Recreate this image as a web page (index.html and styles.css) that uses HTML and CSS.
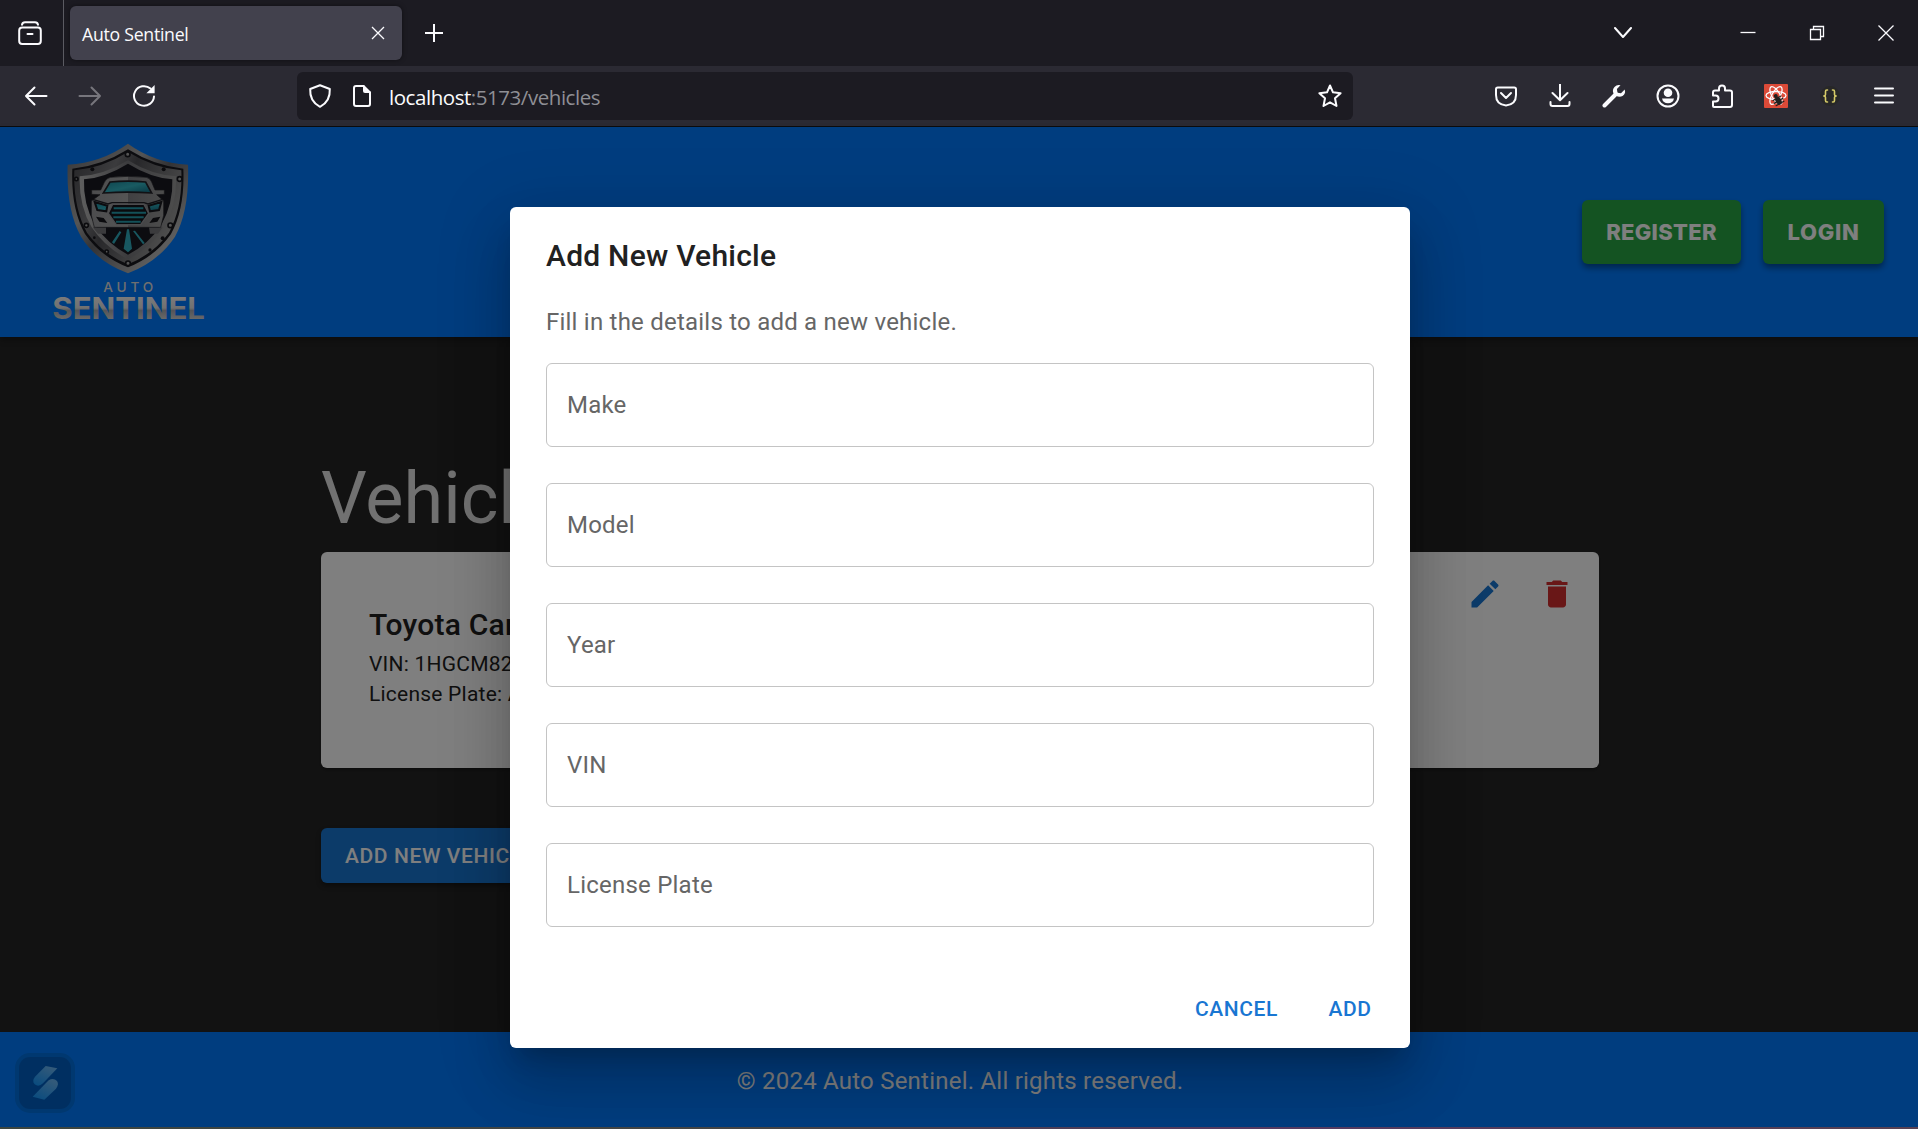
FILE: index.html
```html
<!DOCTYPE html>
<html lang="en">
<head>
<meta charset="utf-8">
<title>Auto Sentinel</title>
<link rel="stylesheet" href="styles.css">
</head>
<body>
<div class="browser">
  <div class="tabstrip">
    <div class="firefox-view">
      <svg class="icon" viewBox="0 0 24 24"><rect x="1.2" y="6.6" width="21.600" height="16.400" rx="3"/><path d="M4 3.700Q4.500 1.200 7 1.200H17Q19.500 1.200 20 3.700M9.500 13H14.500"/></svg>
    </div>
    <div class="tab"><span class="tab-title">Auto Sentinel</span>
      <svg class="tab-close thin" viewBox="0 0 14 14"><path d="M1 1L13 13M13 1L1 13"/></svg>
    </div>
    <svg class="new-tab" viewBox="0 0 18 18"><path d="M9 0V18M0 9H18"/></svg>
    <div class="window-controls">
      <svg class="tabs-list" viewBox="0 0 18 12"><path d="M1 1L9 10L17 1"/></svg>
      <svg class="thin" viewBox="0 0 16 16"><path d="M.5 7.500H15.500"/></svg>
      <svg class="thin" viewBox="0 0 16 16"><path d="M1.500 4.500H11.500V14.500H1.500ZM4.500 4.500V1.500H14.500V11.500H11.500"/></svg>
      <svg class="thin" viewBox="0 0 16 16"><path d="M.5.5L15.500 15.500M15.500.5L.5 15.500"/></svg>
    </div>
  </div>
  <div class="toolbar">
    <div class="nav-buttons">
      <svg class="icon" viewBox="0 0 24 24"><path d="M22.500 12H2M10.500 3.500L2 12L10.500 20.500"/></svg>
      <svg class="icon disabled" viewBox="0 0 24 24"><path d="M1.500 12H22M13.500 3.500L22 12L13.500 20.500"/></svg>
      <svg class="icon" viewBox="0 0 24 24"><path d="M22 12.500A10 9.800 0 1 1 18.500 4.500"/><path class="solid" d="M22.600 1V9.200H14.400Z"/></svg>
    </div>
    <div class="urlbar">
      <svg class="icon" viewBox="0 0 24 24"><path d="M12 1.200L21.800 5Q22.500 17.500 12 22.800Q1.500 17.500 2.200 5Z"/></svg>
      <svg class="icon" viewBox="0 0 24 24"><path d="M13.500 2H6Q4 2 4 4V20Q4 22 6 22H18Q20 22 20 20V8.500"/><path class="solid" d="M13 1H14L21 8V9H15Q13 9 13 7Z"/></svg>
      <span class="url">localhost<span class="url-rest">:5173/vehicles</span></span>
      <svg class="icon star" viewBox="0 0 24 24"><path d="M12 1.500L15 8.300L22.600 9.200L17 14.300L18.500 22L12 18.300L5.500 22L7 14.300L1.400 9.200L9 8.300Z"/></svg>
    </div>
    <div class="extensions">
      <svg class="icon" viewBox="0 0 24 24"><path d="M3.800 3.500H20.200Q22 3.500 22 5.300V11Q22 20.500 12 21.500Q2 20.500 2 11V5.300Q2 3.500 3.800 3.500ZM7 9L12 14L17 9"/></svg>
      <svg class="icon" viewBox="0 0 24 24"><path d="M12 0V16M4.500 9L12 16.200L19.500 9M2.500 18V20Q2.500 22 4.500 22H19.500Q21.500 22 21.500 20V18"/></svg>
      <svg class="icon" viewBox="0 0 24 24"><path class="wrench" d="M2.500 21.500L14 10"/><path class="solid" d="M18.500 1.300L14.900 5L15.500 8.800L19 9.300L22.700 5.600Q24 10 20.500 12Q17.500 13.700 14 11.800L11.500 9.500Q9.900 5.800 12.500 3Q15 .3 18.500 1.300Z"/></svg>
      <svg class="icon" viewBox="0 0 24 24"><circle cx="12" cy="12" r="10.500"/><circle class="solid" cx="12" cy="8.800" r="4.300"/><path class="solid" d="M6 14.500H18Q17 19.300 12 19.300Q7 19.300 6 14.500Z"/></svg>
      <svg class="icon" viewBox="0 0 24 24"><path d="M4 23H20Q22 23 22 21V8.500Q22 6.500 20 6.500H15V4.500A3 3 0 0 0 9 4.500V6.500H5Q3 6.500 3 8.500V11.500H5.500A3 3 0 0 1 5.500 17.500H3V22Q3 23 4 23Z"/></svg>
      <svg class="icon react" viewBox="0 0 24 24"><rect class="react-bg" width="24" height="24" rx="1"/><ellipse cx="12" cy="11.500" rx="10" ry="4"/><ellipse cx="12" cy="11.500" rx="10" ry="4" transform="rotate(60 12 11.500)"/><ellipse cx="12" cy="11.500" rx="10" ry="4" transform="rotate(120 12 11.500)"/><g transform="rotate(-30 14 16)"><ellipse class="bug" cx="14" cy="17" rx="2.800" ry="4.300"/><circle class="bug" cx="14" cy="11.500" r="2"/><path class="bug-legs" d="M9.500 14L18.500 14M9 17H19M9.500 20L18.500 20"/></g></svg>
      <svg class="icon braces" viewBox="0 0 24 24"><circle class="braces-bg" cx="12" cy="12" r="10"/><path d="M9.500 6H8.800Q7.500 6 7.500 7.500V10.500Q7.500 12 5.800 12Q7.500 12 7.500 13.500V16.500Q7.500 18 8.800 18H9.500M14.500 6H15.200Q16.500 6 16.500 7.500V10.500Q16.500 12 18.200 12Q16.500 12 16.500 13.500V16.500Q16.500 18 15.200 18H14.500"/></svg>
      <svg class="icon" viewBox="0 0 24 24"><path d="M3 4.500H21M3 11.500H21M3 18.500H21"/></svg>
    </div>
  </div>
  <div class="viewport">
    <header class="app-header">
      <svg class="logo" viewBox="0 0 540 630" role="img" aria-label="Auto Sentinel">
        <defs>
          <linearGradient id="metal" x1="0" y1="0" x2="1" y2="1"><stop offset="0" stop-color="#6d6d70"/><stop offset=".35" stop-color="#aaa"/><stop offset=".5" stop-color="#66666a"/><stop offset=".8" stop-color="#bbb"/><stop offset="1" stop-color="#777"/></linearGradient>
          <linearGradient id="rim" x1="0" y1="0" x2="1" y2="0"><stop offset="0" stop-color="#bdbdbd"/><stop offset=".5" stop-color="#77777b"/><stop offset="1" stop-color="#999"/></linearGradient>
          <linearGradient id="band" x1="0" y1="0" x2="1" y2=".5"><stop offset="0" stop-color="#4b4b50"/><stop offset=".35" stop-color="#77777b"/><stop offset=".5" stop-color="#505055"/><stop offset="1" stop-color="#9b9b9b"/></linearGradient>
          <linearGradient id="glass" x1="0" y1="0" x2="1" y2="1"><stop offset="0" stop-color="#1d8b9f"/><stop offset=".5" stop-color="#33b6c4"/><stop offset="1" stop-color="#126c83"/></linearGradient>
          <linearGradient id="body" x1="0" y1="0" x2="1" y2="0"><stop offset="0" stop-color="#99999c"/><stop offset=".5" stop-color="#aaa"/><stop offset=".5" stop-color="#808084"/><stop offset="1" stop-color="#999"/></linearGradient>
          <linearGradient id="word" gradientUnits="userSpaceOnUse" x1="0" y1="-64" x2="0" y2="0"><stop offset="0" stop-color="#f5f5f5"/><stop offset=".5" stop-color="#e2e2e2"/><stop offset=".62" stop-color="#a9abb0"/><stop offset="1" stop-color="#d0d0d0"/></linearGradient>
        </defs>
        <path fill="url(#metal)" d="M264 41Q342 98 444 104Q449 240 405 320Q355 395 264 430Q170 395 123 320Q78 240 83 104Q184 98 264 41Z"/>
        <path fill="#18181e" d="M264 58Q344 108 430 116Q435 235 393 312Q345 380 264 412Q182 380 135 312Q92 235 97 116Q184 108 264 58Z"/>
        <path fill="url(#band)" d="M264 66Q344 115 424 121Q428 232 387 308Q340 372 264 403Q187 372 141 308Q99 232 103 121Q185 115 264 66Z"/>
        <path fill="url(#rim)" d="M264 91Q335 135 408 139Q411 225 373 292Q334 352 264 388Q195 352 155 292Q116 225 119 139Q193 135 264 91Z"/>
        <path fill="#181820" d="M264 101Q332 143 397 148Q400 221 364 284Q328 340 264 374Q201 340 164 284Q129 221 132 148Q196 143 264 101Z"/>
        <g fill="#aaa" stroke="#17171c" stroke-width="5"><circle cx="263" cy="73" r="7"/><circle cx="419" cy="147" r="7"/><circle cx="391" cy="286" r="7"/><circle cx="264" cy="400" r="7"/><circle cx="200" cy="365" r="5"/><circle cx="139" cy="286" r="6"/><circle cx="109" cy="147" r="5"/></g>
        <g fill="#17171c"><circle cx="157" cy="118" r="6"/><circle cx="371" cy="118" r="6"/><circle cx="368" cy="325" r="6"/><circle cx="330" cy="360" r="5"/><circle cx="163" cy="323" r="4"/></g>
        <path fill="#77777b" d="M158 292H198V311H174ZM327 292H368L354 311H330Z"/>
        <path fill="url(#body)" stroke="#24242a" stroke-width="2" d="M211 142Q264 136 319 142Q330 144 335 156L345 180L373 180V193L350 194L371 213V256L362 292H163L154 256V213L180 194L155 193V180L182 180L193 157Q198 145 211 142Z"/>
        <path fill="url(#glass)" stroke="#222229" stroke-width="5" d="M210 156Q264 151 317 156L335 189Q264 184 190 189Z"/>
        <path fill="none" stroke="#222229" stroke-width="4" d="M158 208L204 222L216 218H312L324 222L368 208"/>
        <path fill="url(#glass)" stroke="#18181e" stroke-width="6" d="M164 216L202 227L199 244L172 240ZM364 216L326 227L330 244L357 240Z"/>
        <path fill="#15151b" stroke="#99999d" stroke-width="4" d="M218 223H312L326 250L302 284H229L205 250Z"/>
        <path stroke="#26a0b0" stroke-width="6" d="M221 235H310M215 248H318M220 262H311M228 275H302"/>
        <path fill="#17171c" d="M168 260L191 264L202 279L178 275ZM361 260L339 264L328 279L352 275Z"/>
        <path fill="#30afc0" d="M261 298H267L276 356L264 367L251 356ZM239 303L244 307L222 342L216 337ZM279 303L285 302L314 339L309 343Z"/>
        <text class="logo-auto" x="190" y="487" textLength="150">AUTO</text>
        <text class="logo-word" transform="translate(37 566) scale(1.35 1)" x="0" y="0" textLength="339" lengthAdjust="spacingAndGlyphs" fill="url(#word)">SENTINEL</text>
      </svg>
      <nav class="auth"><button class="btn-auth register">REGISTER</button><button class="btn-auth login">LOGIN</button></nav>
    </header>
    <main class="content">
      <h1 class="page-title">Vehicles</h1>
      <section class="card">
        <div class="card-text">
          <h2 class="card-title">Toyota Camry</h2>
          <p class="card-line">VIN: 1HGCM82633A</p>
          <p class="card-line">License Plate: ABC</p>
        </div>
        <div class="card-actions">
          <svg class="mui edit" viewBox="0 0 24 24"><path d="M3 17.250V21h3.750L17.810 9.940l-3.750-3.750L3 17.250zM20.710 7.040c.39-.39.39-1.020 0-1.410l-2.340-2.340c-.39-.39-1.020-.39-1.410 0l-1.830 1.830 3.750 3.750 1.830-1.830z"/></svg>
          <svg class="mui delete" viewBox="0 0 24 24"><path d="M6 19c0 1.100.9 2 2 2h8c1.100 0 2-.9 2-2V7H6v12zM19 4h-3.500l-1-1h-5l-1 1H5v2h14V4z"/></svg>
        </div>
      </section>
      <button class="btn-add">ADD NEW VEHICLE</button>
    </main>
    <footer class="app-footer">© 2024 Auto Sentinel. All rights reserved.</footer>
    <div class="widget">
      <svg viewBox="0 0 156 156"><defs><linearGradient id="bolt" x1="0" y1="1" x2=".6" y2="0"><stop offset="0" stop-color="#0e96ff"/><stop offset="1" stop-color="#66b4f4"/></linearGradient></defs><path fill="url(#bolt)" d="M80 27L115 34L72 79Q59 92 47 82Q38 72 48 59Z"/><path fill="url(#bolt)" d="M41 119L89 70Q103 61 114 72Q121 82 111 95L76 128Z"/></svg>
    </div>
    <div class="backdrop">
      <div class="dialog" role="dialog">
        <h2 class="dialog-title">Add New Vehicle</h2>
        <div class="dialog-content">
          <p class="dialog-text">Fill in the details to add a new vehicle.</p>
          <div class="fields">
            <div class="field">Make</div>
            <div class="field">Model</div>
            <div class="field">Year</div>
            <div class="field">VIN</div>
            <div class="field">License Plate</div>
          </div>
        </div>
        <div class="dialog-actions"><button class="btn-text">CANCEL</button><button class="btn-text">ADD</button></div>
      </div>
    </div>
  </div>
  <div class="desktop-edge"></div>
</div>
</body>
</html>
```
FILE: styles.css
```css
* { box-sizing: border-box; }
body { margin: 0; font-family: Roboto, sans-serif; }
h1, h2, p { margin: 0; }
button { border: 0; font-family: inherit; }
svg { display: block; flex: none; }
.browser { display: flex; flex-direction: column; width: 1918px; height: 1129px; overflow: hidden; }

/* Browser chrome */
.tabstrip { display: flex; align-items: center; height: 66px; background: #1c1b22; }
.tabstrip svg, .icon { fill: none; stroke: #fbfbfe; stroke-width: 2; stroke-linejoin: round; stroke-linecap: round; }
.icon { width: 24px; height: 24px; }
.icon .solid { fill: #fbfbfe; stroke: none; }
.icon.disabled { stroke: #77767d; }
.tabstrip svg.thin { stroke-width: 1.3; stroke-linejoin: miter; stroke-linecap: butt; }
.firefox-view { width: 64px; height: 66px; padding: 21px 0 0 18px; border-right: 1px solid #5b5b62; }
.tab { display: flex; align-items: center; justify-content: space-between; width: 332px; height: 54px; margin-left: 6px; padding: 0 17px 0 12px; border-radius: 6px; background: #42414d; box-shadow: 0 0 5px rgba(0,0,0,.45); }
.tab-title { padding-top: 2px; color: #fbfbfe; font: 17.700px/24px "Open Sans", sans-serif; letter-spacing: -.27px; }
.tab-close { width: 14px; height: 14px; }
.tabstrip .new-tab { width: 18px; height: 18px; margin-left: 23px; }
.window-controls { display: flex; align-items: center; margin-left: auto; padding-right: 24px; }
.window-controls svg { width: 16px; height: 16px; margin-left: 53px; }
.window-controls .tabs-list { width: 18px; height: 12px; margin: 0 55px 0 0; }
.toolbar { display: flex; align-items: center; height: 61px; background: #2b2a33; border-bottom: 1px solid #0c0c0d; }
.nav-buttons { display: flex; gap: 30px; width: 297px; padding-left: 24px; }
.urlbar { display: flex; align-items: center; width: 1056px; height: 48px; padding: 0 11px; gap: 18px; border-radius: 6px; background: #1c1b22; }
.url { margin-left: -3px; padding-top: 2px; color: #fbfbfe; font: 20.500px/30px "Open Sans", sans-serif; letter-spacing: -.45px; }
.url-rest { color: #8f8f95; }
.star { margin-left: auto; }
.extensions { display: flex; gap: 30px; margin-left: auto; padding-right: 22px; }
.icon .wrench { stroke-width: 4; }
.react ellipse { stroke-width: 1.3; }
.icon .react-bg { fill: #dc4a38; stroke: none; }
.icon .bug { fill: #21201f; stroke: none; }
.icon .bug-legs { stroke: #21201f; stroke-width: 1.2; }
.braces path { stroke: #d6cb68; stroke-width: 1.6; }
.icon .braces-bg { fill: #272727; stroke: none; }

/* Application */
.viewport { position: relative; display: flex; flex-direction: column; height: 1000px; background: #242424; }
.app-header { display: flex; align-items: flex-start; justify-content: space-between; height: 210px; padding: 3px 34px 0 40px; background: #007bff; box-shadow: 0 3px 6px rgba(0,0,0,.3); }
.logo { width: 180px; height: 210px; margin-bottom: -3px; overflow: visible; }
.logo-auto { font: 500 41px Inter, sans-serif; fill: #dedede; }
.logo-word { font: 700 88px Inter, sans-serif; }
.auth { display: flex; gap: 22px; padding-top: 70px; }
.btn-auth { height: 64px; border-radius: 6px; background: #28a745; color: #fff; font: 800 22px/64px Inter, sans-serif; padding: 0; box-shadow: 0 4px 6px rgba(0,0,0,.4); }
.register { width: 159px; letter-spacing: .3px; }
.login { width: 121px; letter-spacing: .7px; }
.content { flex: 1; width: 1278px; margin: 0 0 0 321px; padding-top: 120px; }
.page-title { color: #fff; opacity: .87; font-size: 72px; line-height: 84px; font-weight: 400; }
.card { display: flex; justify-content: space-between; height: 216px; margin-top: 11px; padding: 49px 12px 0 48px; border-radius: 6px; background: #fff; color: #212121; box-shadow: 0 3px 2px -2px rgba(0,0,0,.2), 0 2px 2px rgba(0,0,0,.14); }
.card-title { font-size: 30px; line-height: 48px; font-weight: 500; letter-spacing: .225px; }
.card-line { font-size: 21px; line-height: 30px; letter-spacing: .225px; }
.card-actions { display: flex; gap: 36px; margin-top: -25px; padding-right: 12px; }
.mui { width: 36px; height: 36px; }
.edit { fill: #1976d2; }
.delete { fill: #d32f2f; }
.btn-add { display: block; height: 55px; margin-top: 60px; padding: 1px 24px 0; border-radius: 6px; background: #1976d2; color: #fff; font-size: 21px; line-height: 54px; font-weight: 500; letter-spacing: .6px; box-shadow: 0 3px 5px rgba(0,0,0,.35); }
.app-footer { height: 95px; padding: 2px 0 0 2px; background: #007bff; color: #fff; text-align: center; font-size: 24px; line-height: 94px; letter-spacing: .225px; }
.widget { position: absolute; left: 15px; top: 926px; width: 60px; height: 60px; padding: 4px; border-radius: 15px; background: #0070e0; }
.widget svg { width: 52px; height: 52px; border-radius: 11px; background: #005fc3; }

/* Modal */
.backdrop { position: absolute; inset: 0; display: flex; justify-content: center; align-items: flex-start; padding: 80px 0 0 2px; background: rgba(0,0,0,.5); overflow: hidden; }
.dialog { width: 900px; height: 841px; display: flex; flex-direction: column; border-radius: 6px; background: #fff; color: #212121; box-shadow: 0 16px 22px -10px rgba(0,0,0,.2), 0 36px 57px 4px rgba(0,0,0,.14), 0 14px 69px 12px rgba(0,0,0,.12); }
.dialog-title { padding: 25px 36px 24px; font-size: 30px; line-height: 48px; font-weight: 500; letter-spacing: .24px; }
.dialog-content { padding: 0 36px; }
.dialog-text { color: #666; font-size: 24px; line-height: 36px; letter-spacing: .225px; }
.fields { display: flex; flex-direction: column; gap: 36px; margin-top: 23px; }
.field { height: 84px; padding: 0 20px; border: 1px solid #c4c4c4; border-radius: 6px; color: #666; font-size: 24px; line-height: 82px; letter-spacing: .225px; }
.dialog-actions { display: flex; justify-content: flex-end; gap: 12px; margin-top: auto; padding: 12px 12px 11px; }
.btn-text { min-width: 96px; height: 55px; padding: 0 12px; background: none; color: #1976d2; font-size: 21px; line-height: 55px; font-weight: 500; letter-spacing: .6px; }
.desktop-edge { height: 2px; background: linear-gradient(90deg, #3c4640, #444 40%, #543a62 65%, #574152); }
```
